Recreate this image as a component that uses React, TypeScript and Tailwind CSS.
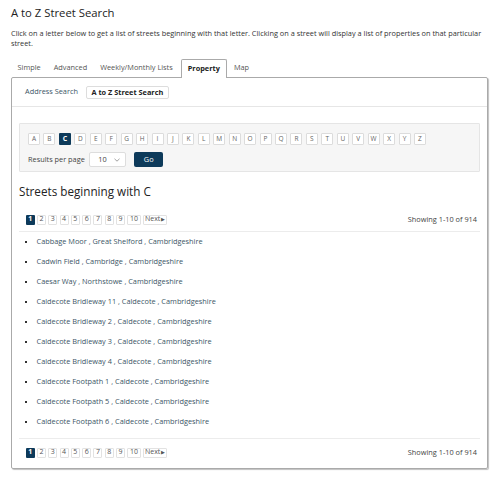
import React from "react";

const letters = "ABCDEFGHIJKLMNOPQRSTUVWXYZ".split("");
const streets = [
  "Cabbage Moor , Great Shelford , Cambridgeshire",
  "Cadwin Field , Cambridge , Cambridgeshire",
  "Caesar Way , Northstowe , Cambridgeshire",
  "Caldecote Bridleway 11 , Caldecote , Cambridgeshire",
  "Caldecote Bridleway 2 , Caldecote , Cambridgeshire",
  "Caldecote Bridleway 3 , Caldecote , Cambridgeshire",
  "Caldecote Bridleway 4 , Caldecote , Cambridgeshire",
  "Caldecote Footpath 1 , Caldecote , Cambridgeshire",
  "Caldecote Footpath 5 , Caldecote , Cambridgeshire",
  "Caldecote Footpath 6 , Caldecote , Cambridgeshire",
];

function Pager() {
  const pages = ["1", "2", "3", "4", "5", "6", "7", "8", "9", "10"];
  return (
    <div className="flex items-center justify-between pl-[6.7px] pr-[3px] h-[10px]">
      <div className="flex items-center gap-[2.3px]">
        {pages.map((p, i) => (
          <span
            key={p}
            className={
              i === 0
                ? "flex h-[10px] w-[9px] items-center justify-center rounded-[1px] bg-[#0d3a5a] text-[7px] font-bold text-white"
                : p === "10"
                ? "flex h-[10px] w-[13.5px] items-center justify-center rounded-[1px] border border-[#e2e2e2] bg-white text-[7px] text-[#555]"
                : "flex h-[10px] w-[9px] items-center justify-center rounded-[1px] border border-[#e2e2e2] bg-white text-[7px] text-[#555]"
            }
          >
            {p}
          </span>
        ))}
        <span className="flex h-[10px] w-[24px] items-center justify-center rounded-[1px] border border-[#e2e2e2] bg-white text-[7px] text-[#555]">
          Next<span className="ml-[1px] text-[4.5px]">▶</span>
        </span>
      </div>
      <span className="text-[7.35px] text-[#444]">Showing 1-10 of 914</span>
    </div>
  );
}

export default function App() {
  return (
    <div
      className="w-[500px] h-[477px] bg-white px-[11px] text-[#333]"
      style={{ fontFamily: '"Open Sans", sans-serif' }}
    >
      <h1 className="pt-[3px] text-[11.3px] leading-[20px] text-[#222]">
        A to Z Street Search
      </h1>
      <p className="mt-[5px] w-[476px] text-[7.35px] leading-[10px] text-[#333]">
        Click on a letter below to get a list of streets beginning with that letter. Clicking on a street will display a list of properties on that particular street.
      </p>
      <div className="mt-[11px] flex items-end h-[18px] text-[7.35px]">
        {["Simple", "Advanced", "Weekly/Monthly Lists"].map((t) => (
          <span key={t} className="px-[6.5px] h-[18px] flex items-center text-[#555]">
            {t}
          </span>
        ))}
        <span className="relative top-[1px] ml-[1.5px] flex h-[19px] items-center rounded-t-[2px] border border-b-0 border-[#aaa] bg-white px-[6px] font-bold text-[#222]">
          Property
        </span>
        <span className="px-[7px] h-[18px] flex items-center text-[#555]">Map</span>
      </div>
      <div className="h-[392px] w-[477px] rounded-[2px] border border-[#aaa] shadow-[1px_1px_1px_rgba(0,0,0,0.25)]">
        <div className="flex items-center gap-[3px] border-b border-[#e6e6e6] px-[8px] py-[7.5px] text-[7.35px]">
          <span className="flex h-[13px] items-center px-[5px] text-[#3b5566]">Address Search</span>
          <span className="flex h-[13px] items-center rounded-[2px] border border-[#ddd] px-[4.5px] font-bold text-[#222]">
            A to Z Street Search
          </span>
        </div>
        <div className="px-[7px] pt-[16px]">
          <div className="h-[49px] rounded-[1px] border border-[#e5e5e5] bg-[#f6f6f6] px-[8px] pt-[9px]">
            <div className="flex gap-[3.44px]">
              {letters.map((l) => (
                <span
                  key={l}
                  className={
                    l === "C"
                      ? "flex h-[12px] w-[12px] items-center justify-center rounded-[1px] bg-[#0d3a5a] text-[7px] font-bold text-white"
                      : "flex h-[12px] w-[12px] items-center justify-center rounded-[1px] border border-[#dcdcdc] bg-white text-[6.5px] text-[#666]"
                  }
                >
                  {l}
                </span>
              ))}
            </div>
            <div className="mt-[7px] flex items-center text-[7.35px]">
              <span className="text-[#444]">Results per page</span>
              <span className="ml-[4.5px] flex h-[15px] w-[37px] items-center rounded-[2px] border border-[#ddd] bg-white pl-[8px] text-[#444]">
                10
                <svg className="ml-[7px]" width="6" height="4" viewBox="0 0 6 4" fill="none">
                  <path d="M0.5 0.8 L3 3.2 L5.5 0.8" stroke="#888" strokeWidth="0.8" />
                </svg>
              </span>
              <span className="ml-[8px] flex h-[15px] w-[29px] items-center justify-center rounded-[2px] bg-[#0d3a5a] text-white">
                Go
              </span>
            </div>
          </div>
          <h2 className="mt-[10.5px] text-[11.7px] leading-[16px] text-[#222]">
            Streets beginning with C
          </h2>
          <div className="mt-[16px]">
            <Pager />
          </div>
          <div className="mt-[6px] border-t border-[#ececec]" />
          <ul className="pb-[6.5px]">
            {streets.map((s) => (
              <li key={s} className="flex h-[20px] items-center text-[7.35px]">
                <span className="ml-[6px] h-[2px] w-[2px] bg-[#333]" />
                <span className="ml-[9.5px] text-[#3b5566]">{s}</span>
              </li>
            ))}
          </ul>
          <div className="border-t border-[#ececec] pt-[8.5px]">
            <Pager />
          </div>
        </div>
      </div>
    </div>
  );
}
